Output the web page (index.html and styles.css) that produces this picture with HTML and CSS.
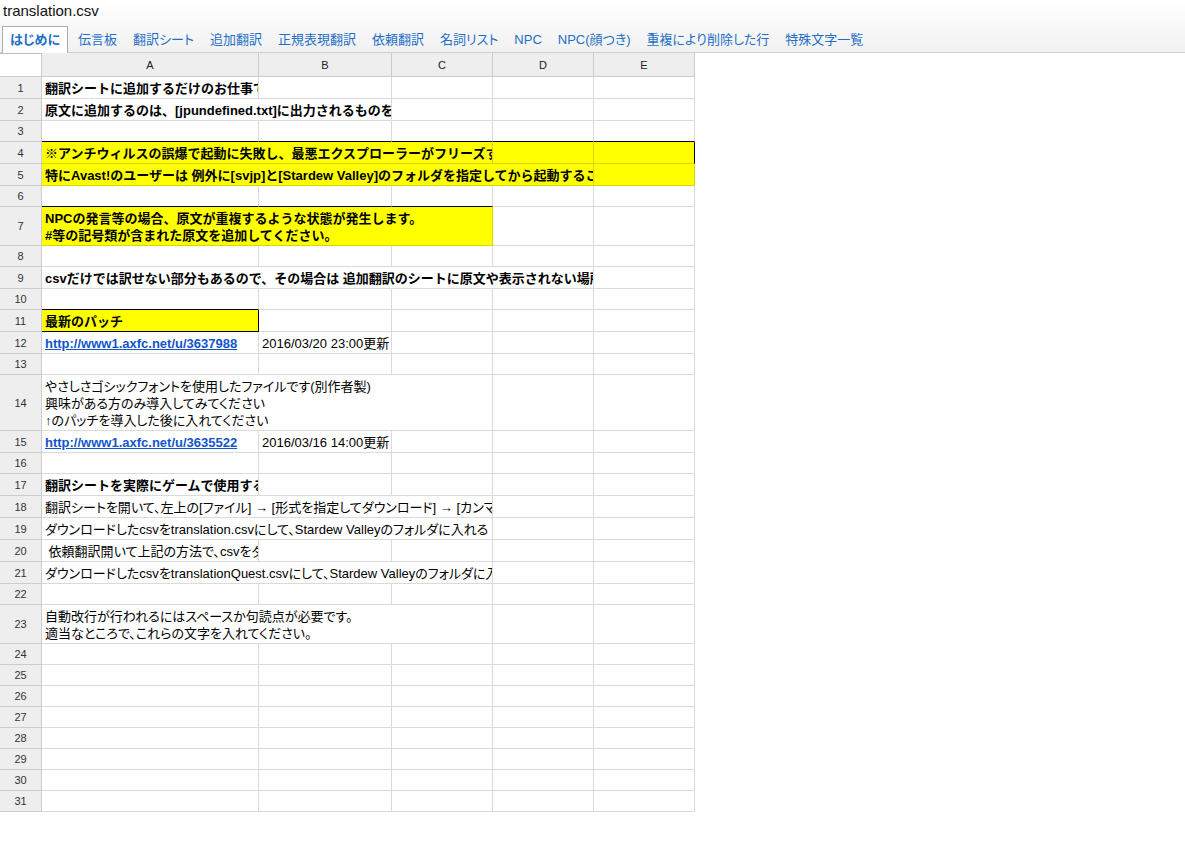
FILE: index.html
```html
<!DOCTYPE html>
<html lang="ja">
<head>
<meta charset="utf-8">
<title>translation.csv</title>
<link rel="stylesheet" href="styles.css">
</head>
<body>
<header class="top">
  <div class="title">translation.csv</div>
  <nav class="tabs">
    <span class="tab active">はじめに</span>
    <span class="tab">伝言板</span>
    <span class="tab">翻訳シート</span>
    <span class="tab">追加翻訳</span>
    <span class="tab">正規表現翻訳</span>
    <span class="tab">依頼翻訳</span>
    <span class="tab">名詞リスト</span>
    <span class="tab">NPC</span>
    <span class="tab">NPC(顔つき)</span>
    <span class="tab">重複により削除した行</span>
    <span class="tab">特殊文字一覧</span>
  </nav>
</header>
<main class="sheet">
  <div class="corner"></div><div class="ch">A</div><div class="ch">B</div><div class="ch">C</div><div class="ch">D</div><div class="ch">E</div>

  <div class="rh">1</div><div class="c b">翻訳シートに追加するだけのお仕事です</div><div class="c"></div><div class="c"></div><div class="c"></div><div class="c"></div>

  <div class="rh">2</div><div class="c b s2">原文に追加するのは、[jpundefined.txt]に出力されるものを</div><div class="c"></div><div class="c"></div><div class="c"></div>

  <div class="rh">3</div><div class="c kb"></div><div class="c kb"></div><div class="c kb"></div><div class="c kb"></div><div class="c kb"></div>

  <div class="rh">4</div><div class="c y b s3">※アンチウィルスの誤爆で起動に失敗し、最悪エクスプローラーがフリーズする</div><div class="c y"></div><div class="c y kr"></div>

  <div class="rh">5</div><div class="c y b s4">特にAvast!のユーザーは 例外に[svjp]と[Stardew Valley]のフォルダを指定してから起動すること</div><div class="c y"></div>

  <div class="rh">6</div><div class="c kb"></div><div class="c kb"></div><div class="c kb"></div><div class="c"></div><div class="c"></div>

  <div class="rh">7</div><div class="c y b s3"><div>NPCの発言等の場合、原文が重複するような状態が発生します。<br>#等の記号類が含まれた原文を追加してください。</div></div><div class="c"></div><div class="c"></div>

  <div class="rh">8</div><div class="c"></div><div class="c"></div><div class="c"></div><div class="c"></div><div class="c"></div>

  <div class="rh">9</div><div class="c b s4">csvだけでは訳せない部分もあるので、その場合は 追加翻訳のシートに原文や表示されない場所</div><div class="c"></div>

  <div class="rh">10</div><div class="c kb"></div><div class="c"></div><div class="c"></div><div class="c"></div><div class="c"></div>

  <div class="rh">11</div><div class="c y b kr kb">最新のパッチ</div><div class="c"></div><div class="c"></div><div class="c"></div><div class="c"></div>

  <div class="rh">12</div><div class="c"><a class="link" href="#">http://www1.axfc.net/u/3637988</a></div><div class="c">2016/03/20 23:00更新</div><div class="c"></div><div class="c"></div><div class="c"></div>

  <div class="rh">13</div><div class="c"></div><div class="c"></div><div class="c"></div><div class="c"></div><div class="c"></div>

  <div class="rh">14</div><div class="c s3"><div>やさしさゴシックフォントを使用したファイルです(別作者製)<br>興味がある方のみ導入してみてください<br>↑のパッチを導入した後に入れてください</div></div><div class="c"></div><div class="c"></div>

  <div class="rh">15</div><div class="c"><a class="link" href="#">http://www1.axfc.net/u/3635522</a></div><div class="c">2016/03/16 14:00更新</div><div class="c"></div><div class="c"></div><div class="c"></div>

  <div class="rh">16</div><div class="c"></div><div class="c"></div><div class="c"></div><div class="c"></div><div class="c"></div>

  <div class="rh">17</div><div class="c b">翻訳シートを実際にゲームで使用する</div><div class="c"></div><div class="c"></div><div class="c"></div><div class="c"></div>

  <div class="rh">18</div><div class="c s3">翻訳シートを開いて、左上の[ファイル] → [形式を指定してダウンロード] → [カンマ区切り</div><div class="c"></div><div class="c"></div>

  <div class="rh">19</div><div class="c s3">ダウンロードしたcsvをtranslation.csvにして、Stardew Valleyのフォルダに入れる</div><div class="c"></div><div class="c"></div>

  <div class="rh">20</div><div class="c">&nbsp;依頼翻訳開いて上記の方法で、csvをダウンロード</div><div class="c"></div><div class="c"></div><div class="c"></div><div class="c"></div>

  <div class="rh">21</div><div class="c s3">ダウンロードしたcsvをtranslationQuest.csvにして、Stardew Valleyのフォルダに入れる</div><div class="c"></div><div class="c"></div>

  <div class="rh">22</div><div class="c"></div><div class="c"></div><div class="c"></div><div class="c"></div><div class="c"></div>

  <div class="rh">23</div><div class="c s3"><div>自動改行が行われるにはスペースか句読点が必要です。<br>適当なところで、これらの文字を入れてください。</div></div><div class="c"></div><div class="c"></div>

  <div class="rh">24</div><div class="c"></div><div class="c"></div><div class="c"></div><div class="c"></div><div class="c"></div>
  <div class="rh">25</div><div class="c"></div><div class="c"></div><div class="c"></div><div class="c"></div><div class="c"></div>
  <div class="rh">26</div><div class="c"></div><div class="c"></div><div class="c"></div><div class="c"></div><div class="c"></div>
  <div class="rh">27</div><div class="c"></div><div class="c"></div><div class="c"></div><div class="c"></div><div class="c"></div>
  <div class="rh">28</div><div class="c"></div><div class="c"></div><div class="c"></div><div class="c"></div><div class="c"></div>
  <div class="rh">29</div><div class="c"></div><div class="c"></div><div class="c"></div><div class="c"></div><div class="c"></div>
  <div class="rh">30</div><div class="c"></div><div class="c"></div><div class="c"></div><div class="c"></div><div class="c"></div>
  <div class="rh">31</div><div class="c"></div><div class="c"></div><div class="c"></div><div class="c"></div><div class="c"></div>
</main>
</body>
</html>
```
FILE: styles.css
```css
html, body {
  margin: 0;
  padding: 0;
  background: #fff;
}
body {
  font-family: "Liberation Sans", "Noto Sans CJK JP", sans-serif;
  color: #000;
  font-feature-settings: "palt";
}
.top {
  background: linear-gradient(#ffffff, #f1f1f1);
}
.title {
  height: 26px;
  line-height: 22px;
  padding-left: 3px;
  font-size: 15px;
  color: #111;
}
.tabs {
  display: flex;
  align-items: flex-end;
  height: 26px;
  padding-left: 2px;
  border-bottom: 1px solid #cfcfcf;
}
.tab {
  height: 25px;
  line-height: 25px;
  padding: 0 7px;
  margin-right: 0;
  border: 1px solid transparent;
  border-bottom: 0;
  font-size: 13px;
  color: #1f6fc6;
  white-space: nowrap;
}
.tab.active {
  background: #fff;
  border-color: #ababab;
  font-weight: bold;
  margin-bottom: -1px;
  margin-right: 2px;
  height: 26px;
}
.sheet {
  display: grid;
  grid-template-columns: 42px 217px 133px 101px 101px 101px;
  grid-template-rows: 24px 22px 22px 21px 22px 22px 21px 39px 21px 22px 21px 22px 22px 21px 56px 22px 21px 22px 22px 22px 22px 22px 21px 39px repeat(8, 21px);
  width: 695px;
}
.sheet > div {
  box-sizing: border-box;
  min-width: 0;
}
.corner {
  background: #fff;
  border-right: 1px solid #cccccc;
  border-bottom: 1px solid #cccccc;
  box-shadow: inset 0 1px 0 #bdbdbd;
}
.ch {
  background: #eeeeee;
  border-right: 1px solid #cccccc;
  border-bottom: 1px solid #cccccc;
  display: flex;
  align-items: center;
  justify-content: center;
  font-size: 11px;
  color: #222;
}
.rh {
  background: #eeeeee;
  border-right: 1px solid #cccccc;
  border-bottom: 1px solid #cccccc;
  display: flex;
  align-items: center;
  justify-content: center;
  font-size: 11px;
  color: #333;
}
.c {
  border-right: 1px solid #dadada;
  border-bottom: 1px solid #dadada;
  display: flex;
  align-items: flex-end;
  overflow: hidden;
  white-space: nowrap;
  padding: 0 3px 1px 3px;
  font-size: 13px;
  line-height: 17px;
}
.b {
  font-weight: bold;
  font-feature-settings: normal;
}
.s2 { grid-column: span 2; }
.s3 { grid-column: span 3; }
.s4 { grid-column: span 4; }
.y {
  background: #ffff00;
  border-right-color: #d8d800;
  border-bottom-color: #d8d800;
}
.kb { border-bottom-color: #000 !important; }
.kr { border-right-color: #000 !important; }
.link {
  color: #1155cc;
  font-weight: bold;
  text-decoration: underline;
}
```
